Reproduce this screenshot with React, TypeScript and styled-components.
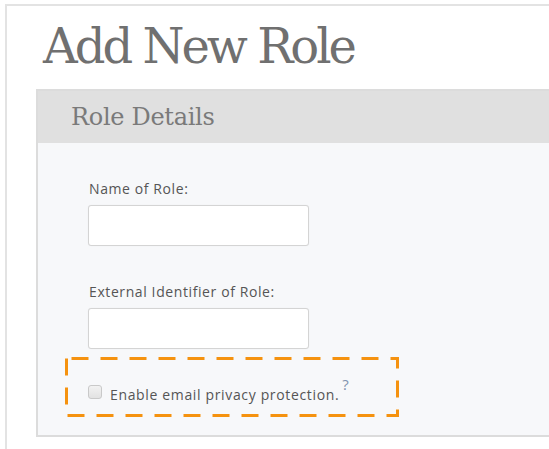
import React from 'react';
import styled, {createGlobalStyle} from 'styled-components';

const GlobalStyle = createGlobalStyle`
  html, body {
    margin: 0;
    padding: 0;
    background: #fff;
    overflow: hidden;
  }
`;

const Frame = styled.div`
  margin: 4px 0 0 5px;
  width: 700px;
  min-height: 460px;
  border-top: 2px solid #e3e3e3;
  border-left: 2px solid #e3e3e3;
  padding-left: 29px;
`;

const Title = styled.h1`
  margin: 0 0 0 7px;
  padding-top: 12px;
  height: 71px;
  font-family: "DejaVu Serif", serif;
  font-weight: normal;
  font-size: 48px;
  line-height: 56px;
  letter-spacing: -3px;
  color: #707070;
`;

const Panel = styled.section`
  width: 600px;
  border: 2px solid #dcdcdc;
  border-right: none;
`;

const PanelHeader = styled.div`
  height: 52px;
  display: flex;
  align-items: center;
  padding-left: 33px;
  background: #e0e0e0;
  font-family: "DejaVu Serif", serif;
  font-size: 24px;
  letter-spacing: -0.3px;
  color: #7a7a7a;
`;

const PanelBody = styled.div`
  background: #f7f8fa;
  padding: 37px 0 18px 50px;
`;

const Field = styled.div<{last?: boolean}>`
  display: flex;
  flex-direction: column;
  align-items: flex-start;
  margin-bottom: ${p => (p.last ? '8px' : '37px')};
`;

const Label = styled.label`
  margin: 0 0 7px 1px;
  font-family: "Open Sans", sans-serif;
  font-size: 14px;
  line-height: 18px;
  letter-spacing: 0.6px;
  color: #555;
`;

const TextInput = styled.input`
  box-sizing: border-box;
  width: 221px;
  height: 41px;
  border: 1px solid #d4d4d4;
  border-radius: 3px;
  background: #fff;
  box-shadow: 0 0 1px rgba(0, 0, 0, 0.08);
  outline: none;
`;

const Highlight = styled.div`
  position: relative;
  box-sizing: border-box;
  width: 334px;
  height: 60px;
  margin-left: -23px;
  padding: 27px 0 0 23px;
  display: flex;
  align-items: flex-start;
`;

const DashedOutline = styled.svg`
  position: absolute;
  inset: 0;
  width: 100%;
  height: 100%;
  pointer-events: none;
`;

const CheckBox = styled.span`
  box-sizing: border-box;
  flex: none;
  width: 14px;
  height: 14px;
  margin-top: 1px;
  border: 1px solid #c9c9c9;
  border-radius: 3px;
  background: linear-gradient(#f2f2f2, #e2e2e2);
`;

const CheckText = styled.span`
  margin-left: 8px;
  font-family: "Open Sans", sans-serif;
  font-size: 14px;
  line-height: 18px;
  letter-spacing: 0.65px;
  color: #555;
`;

const Help = styled.sup`
  margin-left: 3px;
  font-size: 15px;
  line-height: 0;
  letter-spacing: 0;
  vertical-align: 10px;
  color: #7f93b0;
`;

const App = () => {
    return (
        <>
            <GlobalStyle/>
            <Frame>
                <Title>Add New Role</Title>
                <Panel>
                    <PanelHeader>Role Details</PanelHeader>
                    <PanelBody>
                        <Field>
                            <Label>Name of Role:</Label>
                            <TextInput type="text"/>
                        </Field>
                        <Field last>
                            <Label>External Identifier of Role:</Label>
                            <TextInput type="text"/>
                        </Field>
                        <Highlight>
                            <DashedOutline>
                                <rect x="1.5" y="1.5" width="331" height="57" fill="none"
                                      stroke="#f5920f" strokeWidth="3" strokeDasharray="17 12"
                                      strokeDashoffset="-5"/>
                            </DashedOutline>
                            <CheckBox/>
                            <CheckText>
                                Enable email privacy protection.
                                <Help>?</Help>
                            </CheckText>
                        </Highlight>
                    </PanelBody>
                </Panel>
            </Frame>
        </>
    );
};

export default App;
